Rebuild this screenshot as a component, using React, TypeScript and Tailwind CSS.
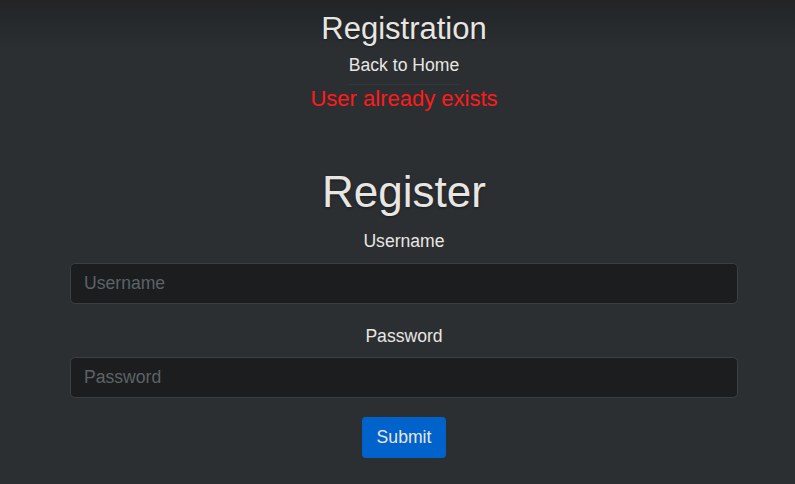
import React from "react";

const App = () => {
  return (
    <div className="min-h-screen w-full bg-[#2b2f32] bg-[linear-gradient(to_bottom,#222426_0px,#2b2f32_48px)] font-['Liberation_Sans',Arial,sans-serif] text-[#e8e6e3]">
      <div className="flex flex-col items-center pl-[13px] pt-[11px]">
        {/* header */}
        <h1 className="text-[31px] leading-[36px] font-normal [text-shadow:0_1px_2px_rgba(0,0,0,0.35)]">
          Registration
        </h1>
        <a href="#" className="mt-[5.6px] text-[17.6px] leading-[24px]">
          Back to Home
        </a>
        <div className="mt-[7.4px] h-px w-[110px] bg-[#33373b]" />
        <p className="mt-[0.7px] text-[22px] leading-[26px] text-[#ff1a1a]">User already exists</p>

        {/* form */}
        <h2 className="mt-[54px] text-[44px] leading-[52px] font-normal [text-shadow:0_1px_3px_rgba(0,0,0,0.4)]">
          Register
        </h2>
        <label className="mt-[11.6px] text-[17.6px] leading-[24px]">Username</label>
        <input
          type="text"
          placeholder="Username"
          className="mt-[9.6px] h-[41px] w-[668px] rounded-[5px] border border-[#3a3f43] bg-[#1b1d1f] pl-[13px] pr-3 text-[17.6px] text-[#e8e6e3] placeholder:text-[#5d6367] outline-none"
        />
        <label className="mt-[19.8px] text-[17.6px] leading-[24px]">Password</label>
        <input
          type="password"
          placeholder="Password"
          className="mt-[9.5px] h-[41px] w-[668px] rounded-[5px] border border-[#3a3f43] bg-[#1b1d1f] pl-[13px] pr-3 text-[17.6px] text-[#e8e6e3] placeholder:text-[#5d6367] outline-none"
        />
        <button className="mt-[18.4px] flex h-[41px] w-[84px] items-center justify-center rounded-[4px] bg-[#0063cc] text-[17.6px] text-[#e8e6e3]">
          Submit
        </button>
      </div>
    </div>
  );
};

export default App;
